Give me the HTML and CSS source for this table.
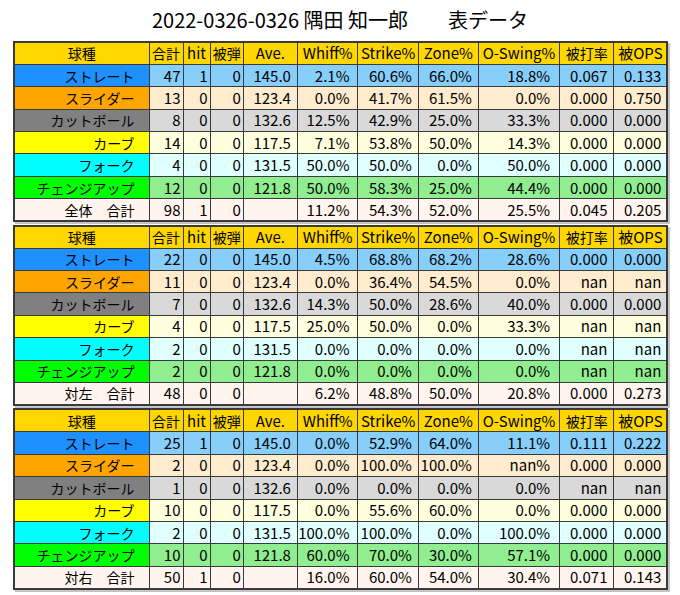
FILE: index.html
```html
<!DOCTYPE html>
<html lang="ja">
<head>
<meta charset="utf-8">
<title>2022-0326-0326 隅田 知一郎 表データ</title>
<link rel="stylesheet" href="styles.css">
</head>
<body>
<div class="page">
  <h1 class="title">2022-0326-0326 隅田 知一郎　　表データ</h1>
  <div class="tables">
    <table class="stats">
      <colgroup><col class="c-name"><col class="c-n"><col class="c-hit"><col class="c-hr"><col class="c-ave"><col class="c-wh"><col class="c-st"><col class="c-zn"><col class="c-os"><col class="c-ba"><col class="c-ops"></colgroup>
      <tr class="head"><td class="jp">球種</td><td class="jp">合計</td><td>hit</td><td class="jp">被弾</td><td>Ave.</td><td>Whiff%</td><td>Strike%</td><td>Zone%</td><td>O-Swing%</td><td class="jp">被打率</td><td>被OPS</td></tr>
      <tr class="r-ff"><td class="name">ストレート</td><td class="n">47</td><td class="n">1</td><td class="n">0</td><td class="ave">145.0</td><td class="wh">2.1%</td><td class="st">60.6%</td><td class="zn">66.0%</td><td class="os">18.8%</td><td class="ba">0.067</td><td class="ops">0.133</td></tr>
      <tr class="r-sl"><td class="name">スライダー</td><td class="n">13</td><td class="n">0</td><td class="n">0</td><td class="ave">123.4</td><td class="wh">0.0%</td><td class="st">41.7%</td><td class="zn">61.5%</td><td class="os">0.0%</td><td class="ba">0.000</td><td class="ops">0.750</td></tr>
      <tr class="r-ct"><td class="name">カットボール</td><td class="n">8</td><td class="n">0</td><td class="n">0</td><td class="ave">132.6</td><td class="wh">12.5%</td><td class="st">42.9%</td><td class="zn">25.0%</td><td class="os">33.3%</td><td class="ba">0.000</td><td class="ops">0.000</td></tr>
      <tr class="r-cu"><td class="name">カーブ</td><td class="n">14</td><td class="n">0</td><td class="n">0</td><td class="ave">117.5</td><td class="wh">7.1%</td><td class="st">53.8%</td><td class="zn">50.0%</td><td class="os">14.3%</td><td class="ba">0.000</td><td class="ops">0.000</td></tr>
      <tr class="r-fo"><td class="name">フォーク</td><td class="n">4</td><td class="n">0</td><td class="n">0</td><td class="ave">131.5</td><td class="wh">50.0%</td><td class="st">50.0%</td><td class="zn">0.0%</td><td class="os">50.0%</td><td class="ba">0.000</td><td class="ops">0.000</td></tr>
      <tr class="r-ch"><td class="name">チェンジアップ</td><td class="n">12</td><td class="n">0</td><td class="n">0</td><td class="ave">121.8</td><td class="wh">50.0%</td><td class="st">58.3%</td><td class="zn">25.0%</td><td class="os">44.4%</td><td class="ba">0.000</td><td class="ops">0.000</td></tr>
      <tr class="r-tot"><td class="name">全体　合計</td><td class="n">98</td><td class="n">1</td><td class="n">0</td><td class="ave"></td><td class="wh">11.2%</td><td class="st">54.3%</td><td class="zn">52.0%</td><td class="os">25.5%</td><td class="ba">0.045</td><td class="ops">0.205</td></tr>
    </table>
    <table class="stats">
      <colgroup><col class="c-name"><col class="c-n"><col class="c-hit"><col class="c-hr"><col class="c-ave"><col class="c-wh"><col class="c-st"><col class="c-zn"><col class="c-os"><col class="c-ba"><col class="c-ops"></colgroup>
      <tr class="head"><td class="jp">球種</td><td class="jp">合計</td><td>hit</td><td class="jp">被弾</td><td>Ave.</td><td>Whiff%</td><td>Strike%</td><td>Zone%</td><td>O-Swing%</td><td class="jp">被打率</td><td>被OPS</td></tr>
      <tr class="r-ff"><td class="name">ストレート</td><td class="n">22</td><td class="n">0</td><td class="n">0</td><td class="ave">145.0</td><td class="wh">4.5%</td><td class="st">68.8%</td><td class="zn">68.2%</td><td class="os">28.6%</td><td class="ba">0.000</td><td class="ops">0.000</td></tr>
      <tr class="r-sl"><td class="name">スライダー</td><td class="n">11</td><td class="n">0</td><td class="n">0</td><td class="ave">123.4</td><td class="wh">0.0%</td><td class="st">36.4%</td><td class="zn">54.5%</td><td class="os">0.0%</td><td class="ba">nan</td><td class="ops">nan</td></tr>
      <tr class="r-ct"><td class="name">カットボール</td><td class="n">7</td><td class="n">0</td><td class="n">0</td><td class="ave">132.6</td><td class="wh">14.3%</td><td class="st">50.0%</td><td class="zn">28.6%</td><td class="os">40.0%</td><td class="ba">0.000</td><td class="ops">0.000</td></tr>
      <tr class="r-cu"><td class="name">カーブ</td><td class="n">4</td><td class="n">0</td><td class="n">0</td><td class="ave">117.5</td><td class="wh">25.0%</td><td class="st">50.0%</td><td class="zn">0.0%</td><td class="os">33.3%</td><td class="ba">nan</td><td class="ops">nan</td></tr>
      <tr class="r-fo"><td class="name">フォーク</td><td class="n">2</td><td class="n">0</td><td class="n">0</td><td class="ave">131.5</td><td class="wh">0.0%</td><td class="st">0.0%</td><td class="zn">0.0%</td><td class="os">0.0%</td><td class="ba">nan</td><td class="ops">nan</td></tr>
      <tr class="r-ch"><td class="name">チェンジアップ</td><td class="n">2</td><td class="n">0</td><td class="n">0</td><td class="ave">121.8</td><td class="wh">0.0%</td><td class="st">0.0%</td><td class="zn">0.0%</td><td class="os">0.0%</td><td class="ba">nan</td><td class="ops">nan</td></tr>
      <tr class="r-tot"><td class="name">対左　合計</td><td class="n">48</td><td class="n">0</td><td class="n">0</td><td class="ave"></td><td class="wh">6.2%</td><td class="st">48.8%</td><td class="zn">50.0%</td><td class="os">20.8%</td><td class="ba">0.000</td><td class="ops">0.273</td></tr>
    </table>
    <table class="stats">
      <colgroup><col class="c-name"><col class="c-n"><col class="c-hit"><col class="c-hr"><col class="c-ave"><col class="c-wh"><col class="c-st"><col class="c-zn"><col class="c-os"><col class="c-ba"><col class="c-ops"></colgroup>
      <tr class="head"><td class="jp">球種</td><td class="jp">合計</td><td>hit</td><td class="jp">被弾</td><td>Ave.</td><td>Whiff%</td><td>Strike%</td><td>Zone%</td><td>O-Swing%</td><td class="jp">被打率</td><td>被OPS</td></tr>
      <tr class="r-ff"><td class="name">ストレート</td><td class="n">25</td><td class="n">1</td><td class="n">0</td><td class="ave">145.0</td><td class="wh">0.0%</td><td class="st">52.9%</td><td class="zn">64.0%</td><td class="os">11.1%</td><td class="ba">0.111</td><td class="ops">0.222</td></tr>
      <tr class="r-sl"><td class="name">スライダー</td><td class="n">2</td><td class="n">0</td><td class="n">0</td><td class="ave">123.4</td><td class="wh">0.0%</td><td class="st">100.0%</td><td class="zn">100.0%</td><td class="os">nan%</td><td class="ba">0.000</td><td class="ops">0.000</td></tr>
      <tr class="r-ct"><td class="name">カットボール</td><td class="n">1</td><td class="n">0</td><td class="n">0</td><td class="ave">132.6</td><td class="wh">0.0%</td><td class="st">0.0%</td><td class="zn">0.0%</td><td class="os">0.0%</td><td class="ba">nan</td><td class="ops">nan</td></tr>
      <tr class="r-cu"><td class="name">カーブ</td><td class="n">10</td><td class="n">0</td><td class="n">0</td><td class="ave">117.5</td><td class="wh">0.0%</td><td class="st">55.6%</td><td class="zn">60.0%</td><td class="os">0.0%</td><td class="ba">0.000</td><td class="ops">0.000</td></tr>
      <tr class="r-fo"><td class="name">フォーク</td><td class="n">2</td><td class="n">0</td><td class="n">0</td><td class="ave">131.5</td><td class="wh">100.0%</td><td class="st">100.0%</td><td class="zn">0.0%</td><td class="os">100.0%</td><td class="ba">0.000</td><td class="ops">0.000</td></tr>
      <tr class="r-ch"><td class="name">チェンジアップ</td><td class="n">10</td><td class="n">0</td><td class="n">0</td><td class="ave">121.8</td><td class="wh">60.0%</td><td class="st">70.0%</td><td class="zn">30.0%</td><td class="os">57.1%</td><td class="ba">0.000</td><td class="ops">0.000</td></tr>
      <tr class="r-tot"><td class="name">対右　合計</td><td class="n">50</td><td class="n">1</td><td class="n">0</td><td class="ave"></td><td class="wh">16.0%</td><td class="st">60.0%</td><td class="zn">54.0%</td><td class="os">30.4%</td><td class="ba">0.071</td><td class="ops">0.143</td></tr>
    </table>
  </div>
</div>
</body>
</html>
```
FILE: styles.css
```css
html, body {
  margin: 0;
  padding: 0;
  background: #ffffff;
}

body {
  font-family: "Noto Sans CJK JP", "Noto Sans", sans-serif;
  color: #000000;
}

.page {
  width: 680px;
  height: 595px;
}

.title {
  margin: 0;
  height: 41px;
  font-size: 20px;
  font-weight: normal;
  line-height: 40px;
  text-align: center;
}

.tables {
  display: flex;
  flex-direction: column;
  gap: 2.6px;
  padding-left: 13px;
}

.stats {
  border-collapse: collapse;
  table-layout: fixed;
  width: 654px;
  border: 2px solid #3a3a3a;
  box-shadow: 2px 2px 0 #c4c4c4;
  font-size: 15px;
}

.c-name { width: 135px; }
.c-n { width: 34px; }
.c-hit { width: 27px; }
.c-hr { width: 33.4px; }
.c-ave { width: 54px; }
.c-wh { width: 60.6px; }
.c-st { width: 60.4px; }
.c-zn { width: 60px; }
.c-os { width: 81.3px; }
.c-ba { width: 54.3px; }
.c-ops { width: 53.4px; }

.stats tr {
  height: 22.4px;
}

.stats td {
  border: 1px solid #3a3a3a;
  padding: 0 2px 0 0;
  line-height: 20px;
  text-align: right;
  white-space: nowrap;
  overflow: hidden;
}

.stats .head td {
  background: #ffd700;
  text-align: center;
  padding: 0;
}

.stats .head td.jp {
  font-size: 14px;
}

.stats td.name {
  font-size: 14px;
  padding-right: 14px;
}

.stats td.ave { padding-right: 6px; }
.stats td.wh { padding-right: 8px; }
.stats td.st { padding-right: 6px; }
.stats td.zn { padding-right: 6px; }
.stats td.os { padding-right: 9px; }
.stats td.ba { padding-right: 6px; }
.stats td.ops { padding-right: 5px; }

.r-ff td { background: #87cefa; }
.r-ff td.name { background: #1e90ff; }

.r-sl td { background: #ffebcd; }
.r-sl td.name { background: #ffa500; }

.r-ct td { background: #d9d9d9; }
.r-ct td.name { background: #808080; }

.r-cu td { background: #ffffe0; }
.r-cu td.name { background: #ffff00; }

.r-fo td { background: #e0ffff; }
.r-fo td.name { background: #00ffff; }

.r-ch td { background: #90ee90; }
.r-ch td.name { background: #00ff00; }

.r-tot td { background: #fff5ee; }
```
